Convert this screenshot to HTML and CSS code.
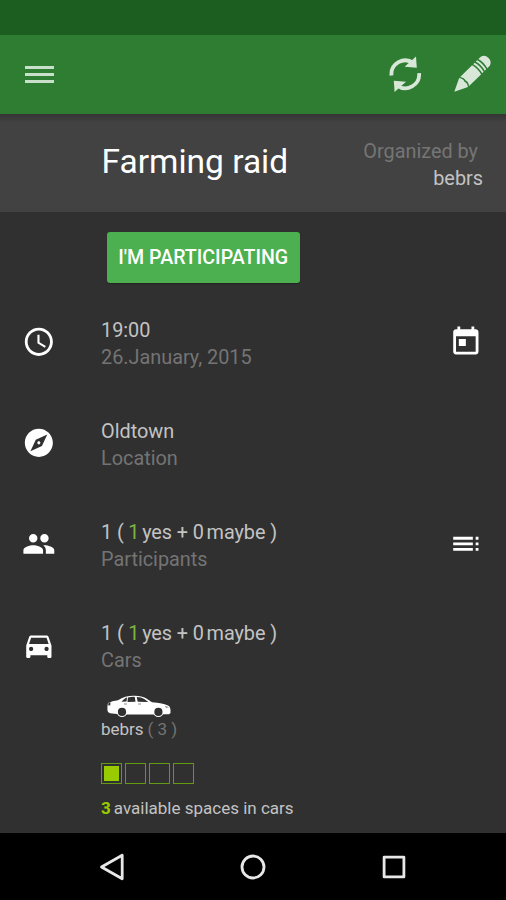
FILE: index.html
```html
<!DOCTYPE html>
<html lang="en">
<head>
<meta charset="utf-8">
<title>Farming raid</title>
<link rel="stylesheet" href="styles.css">
</head>
<body>
<div class="status"></div>
<header class="appbar">
  <svg class="menu" viewBox="0 0 29 18"><path d="M0 0h29v3H0zM0 7h29v3H0zM0 14h29v3H0z"/></svg>
  <div class="actions">
    <svg class="refresh" viewBox="0 0 34 37">
      <g id="arrow"><path d="M3.5 19.5A13.8 13.8 0 0 1 25.5 7.2" fill="none" stroke="#d8e7d8" stroke-width="3.8"/><path d="M28 .6l.8 11.2-12.2-1z"/></g>
      <use href="#arrow" transform="rotate(180 17.3 18.3)"/>
    </svg>
    <svg class="pencil" viewBox="0 0 36 36"><g transform="translate(.3 35.7) rotate(-44.5)">
      <path d="M0 0L13-6.3Q15.5-3 14.3 0Q15.5 3 13 6.3zM14.5-6.4H31.2Q33 0 31.2 6.4H14.5Q17 3 15.9 0Q17-3 14.5-6.4zM32.8-6.4H34.8Q36.6 0 34.8 6.4H32.8Q34.6 0 32.8-6.4zM36.4-6.4H38.4Q40.2 0 38.4 6.4H36.4Q38.2 0 36.4-6.4zM40-6.4H43.5Q48-5 48 0T43.5 6.4H40Q41.8 0 40-6.4z"/>
    </g></svg>
  </div>
</header>
<section class="hero">
  <h1>Farming raid</h1>
  <div class="organizer"><span class="by">Organized by</span><span class="who">bebrs</span></div>
</section>
<main>
  <button class="join">I'M PARTICIPATING</button>
  <div class="row">
    <svg class="icon" viewBox="0 0 24 24"><path d="M11.99 2C6.47 2 2 6.48 2 12s4.47 10 9.99 10C17.52 22 22 17.52 22 12S17.52 2 11.99 2zM12 20c-4.42 0-8-3.58-8-8s3.58-8 8-8 8 3.58 8 8-3.58 8-8 8zm.5-13H11v6l5.25 3.15.75-1.23-4.5-2.67z"/></svg>
    <div class="text"><p>19:00</p><p class="sub date">26.January, 2015</p></div>
    <svg class="icon" viewBox="0 0 24 24"><path d="M19 3h-1V1h-2v2H8V1H6v2H5c-1.11 0-1.99.9-1.99 2L3 19c0 1.1.89 2 2 2h14c1.1 0 2-.9 2-2V5c0-1.1-.9-2-2-2zm0 16H5V8h14v11zM7 10h5v5H7z"/></svg>
  </div>
  <div class="row">
    <svg class="icon" viewBox="0 0 24 24"><path d="M12 10.9c-.61 0-1.1.49-1.1 1.1s.49 1.1 1.1 1.1c.61 0 1.1-.49 1.1-1.1s-.49-1.1-1.1-1.1zM12 2C6.48 2 2 6.48 2 12s4.48 10 10 10 10-4.48 10-10S17.52 2 12 2zm2.19 12.19L6 18l3.81-8.19L18 6l-3.81 8.19z"/></svg>
    <div class="text"><p>Oldtown</p><p class="sub">Location</p></div>
  </div>
  <div class="row">
    <svg class="icon" viewBox="0 0 24 24"><path d="M16 11c1.66 0 2.99-1.34 2.99-3S17.66 5 16 5c-1.66 0-3 1.34-3 3s1.34 3 3 3zm-8 0c1.66 0 2.99-1.34 2.99-3S9.66 5 8 5C6.34 5 5 6.34 5 8s1.34 3 3 3zm0 2c-2.33 0-7 1.17-7 3.5V19h14v-2.5c0-2.33-4.67-3.5-7-3.5zm8 0c-.29 0-.62.02-.97.05 1.16.84 1.97 1.97 1.97 3.45V19h6v-2.5c0-2.33-4.67-3.5-7-3.5z"/></svg>
    <div class="text"><p class="count"><span>1 (</span><span class="yes">1</span><span>yes + 0</span><span>maybe )</span></p><p class="sub">Participants</p></div>
    <svg class="icon" viewBox="0 0 24 24"><path d="M3 9h14V7H3v2zm0 4h14v-2H3v2zm0 4h14v-2H3v2zm16 0h2v-2h-2v2zm0-10v2h2V7h-2zm0 6h2v-2h-2v2z"/></svg>
  </div>
  <div class="row">
    <svg class="icon car" viewBox="0 0 24 24"><path d="M18.92 5.01C18.72 4.42 18.16 4 17.5 4h-11c-.66 0-1.21.42-1.42 1.01L3 11v8c0 .55.45 1 1 1h1c.55 0 1-.45 1-1v-1h12v1c0 .55.45 1 1 1h1c.55 0 1-.45 1-1v-8l-2.08-5.99zM6.5 15c-.83 0-1.5-.67-1.5-1.5S5.67 12 6.5 12s1.5.67 1.5 1.5S7.33 15 6.5 15zm11 0c-.83 0-1.5-.67-1.5-1.5s.67-1.5 1.5-1.5 1.5.67 1.5 1.5-.67 1.5-1.5 1.5zM5 10l1.5-4.5h11L19 10H5z"/></svg>
    <div class="text"><p class="count"><span>1 (</span><span class="yes">1</span><span>yes + 0</span><span>maybe )</span></p><p class="sub">Cars</p></div>
  </div>
  <div class="cars">
    <svg class="sedan" viewBox="0 0 64 22">
      <path d="M1 7.5Q5 5.5 11 4.7Q18 .2 27 .3Q35 .2 39 2.8L45 6.8Q56 7.5 61.5 10.3Q64 12 63.5 17.5L62 18.7H56L47 19H20L10 18.5L3 17.7Q.3 16.8.4 14.5Q.2 10 1 7.5z"/>
      <circle cx="15" cy="16.4" r="5.2"/><circle cx="51.4" cy="16.4" r="5.2"/>
      <circle cx="15" cy="16.4" r="4.1" class="dark"/><circle cx="51.4" cy="16.4" r="4.1" class="dark"/>
      <path class="dark" d="M14.5 6.3Q18 2.3 20 2.1L19.5 6zM20.9 2Q25 1.2 27.8 1.4L28.5 6.2 20.5 6.4zM29.7 1.5Q34.5 1.7 37.3 3.6L41.3 6.5 30.7 6.3zM58 10.7L62 11.8 59 12zM1.5 7.3L3.4 6.7 3.3 9.8 1.2 10z"/>
      <path d="M17 8.5h3M31 8.5h3" stroke="#777" stroke-width=".8"/>
    </svg>
    <p class="driver">bebrs <span>( 3 )</span></p>
    <div class="seats"><i class="taken"></i><i></i><i></i><i></i></div>
    <p class="spaces"><b>3</b>available spaces in cars</p>
  </div>
</main>
<nav>
  <svg viewBox="0 0 28 28"><path d="M23.2 2.2V25.8L2.5 14z"/></svg>
  <svg viewBox="0 0 28 28"><circle cx="14" cy="14" r="11"/></svg>
  <svg viewBox="0 0 28 28"><rect x="4.1" y="4.1" width="19.8" height="19.8"/></svg>
</nav>
</body>
</html>
```
FILE: styles.css
```css
* { box-sizing: border-box; }
body {
  margin: 0;
  height: 900px;
  display: flex;
  flex-direction: column;
  overflow: hidden;
  background: #303030;
  color: #c3c3c3;
  font: 19.85px/27px Roboto, sans-serif;
}
h1, p { margin: 0; white-space: nowrap; }
svg { display: block; flex: none; fill: #fff; }
.status { height: 35px; background: #1b5e20; flex: none; }
.appbar {
  height: 79px;
  flex: none;
  display: flex;
  justify-content: space-between;
  padding: 0 16.5px 0 25px;
  background: #2e7d32;
}
.appbar svg { fill: #d8e7d8; }
.appbar .menu { width: 29px; height: 18px; margin-top: 31px; fill: #c8dfc9; }
.actions { display: flex; gap: 31.5px; }
.refresh { width: 34px; height: 37px; margin-top: 21px; }
.pencil { width: 36px; height: 36px; margin-top: 21px; overflow: visible; }
.hero {
  height: 98px;
  flex: none;
  display: flex;
  justify-content: space-between;
  padding: 0 23px 0 101.5px;
  background: linear-gradient(#353535, #424242 9px);
}
h1 { margin-top: 28px; color: #fff; font-size: 33.5px; font-weight: 400; line-height: 40px; }
.organizer { display: flex; flex-direction: column; align-items: flex-end; padding-top: 24px; }
.by { margin-right: 5px; color: #757575; }
main { flex: 1; display: flex; flex-direction: column; }
.join {
  width: 192.5px;
  height: 51px;
  flex: none;
  margin: 20px 0 8px 107px;
  padding: 1px 0 0;
  border: 0;
  border-radius: 3px;
  background: #4caf50;
  box-shadow: 0 1px 1px #0004;
  color: #fff;
  font: 500 19.6px/50px Roboto, sans-serif;
  white-space: nowrap;
}
.row {
  height: 101.2px;
  flex: none;
  display: flex;
  align-items: center;
  padding: 0 22.5px;
}
.icon { width: 33.7px; height: 33.7px; margin-left: -.5px; margin-right: .5px; }
.car { margin-top: 3px; }
.text { flex: 1; padding: 4.4px 0 0 44.8px; }
.sub { color: #747474; }
.count { display: flex; letter-spacing: -.07px; }
.count span { margin-right: 2.7px; }
.count .yes { color: #7cb342; margin-left: 2px; }
.cars { margin: -.8px 0 0 101px; font-size: 17px; line-height: 22px; }
.sedan { width: 64px; height: 23px; margin-left: 6px; }
.dark { fill: #303030; }
.driver { letter-spacing: -.05px; }
.driver span { color: #747474; }
.seats { display: flex; gap: 3px; margin: 23px 0 13px; }
.seats i { width: 21px; height: 21px; border: 1px solid #649a12; }
.seats .taken { background: #9c0; box-shadow: inset 0 0 0 2px #303030; }
.spaces b { color: #9c0; margin-right: 3px; }
nav {
  height: 67px;
  flex: none;
  display: flex;
  justify-content: center;
  align-items: center;
  gap: 112.5px;
  background: #000;
}
nav svg { width: 28px; height: 28px; fill: none; stroke: #e8e8e8; stroke-width: 2.8; stroke-linejoin: round; }
```
